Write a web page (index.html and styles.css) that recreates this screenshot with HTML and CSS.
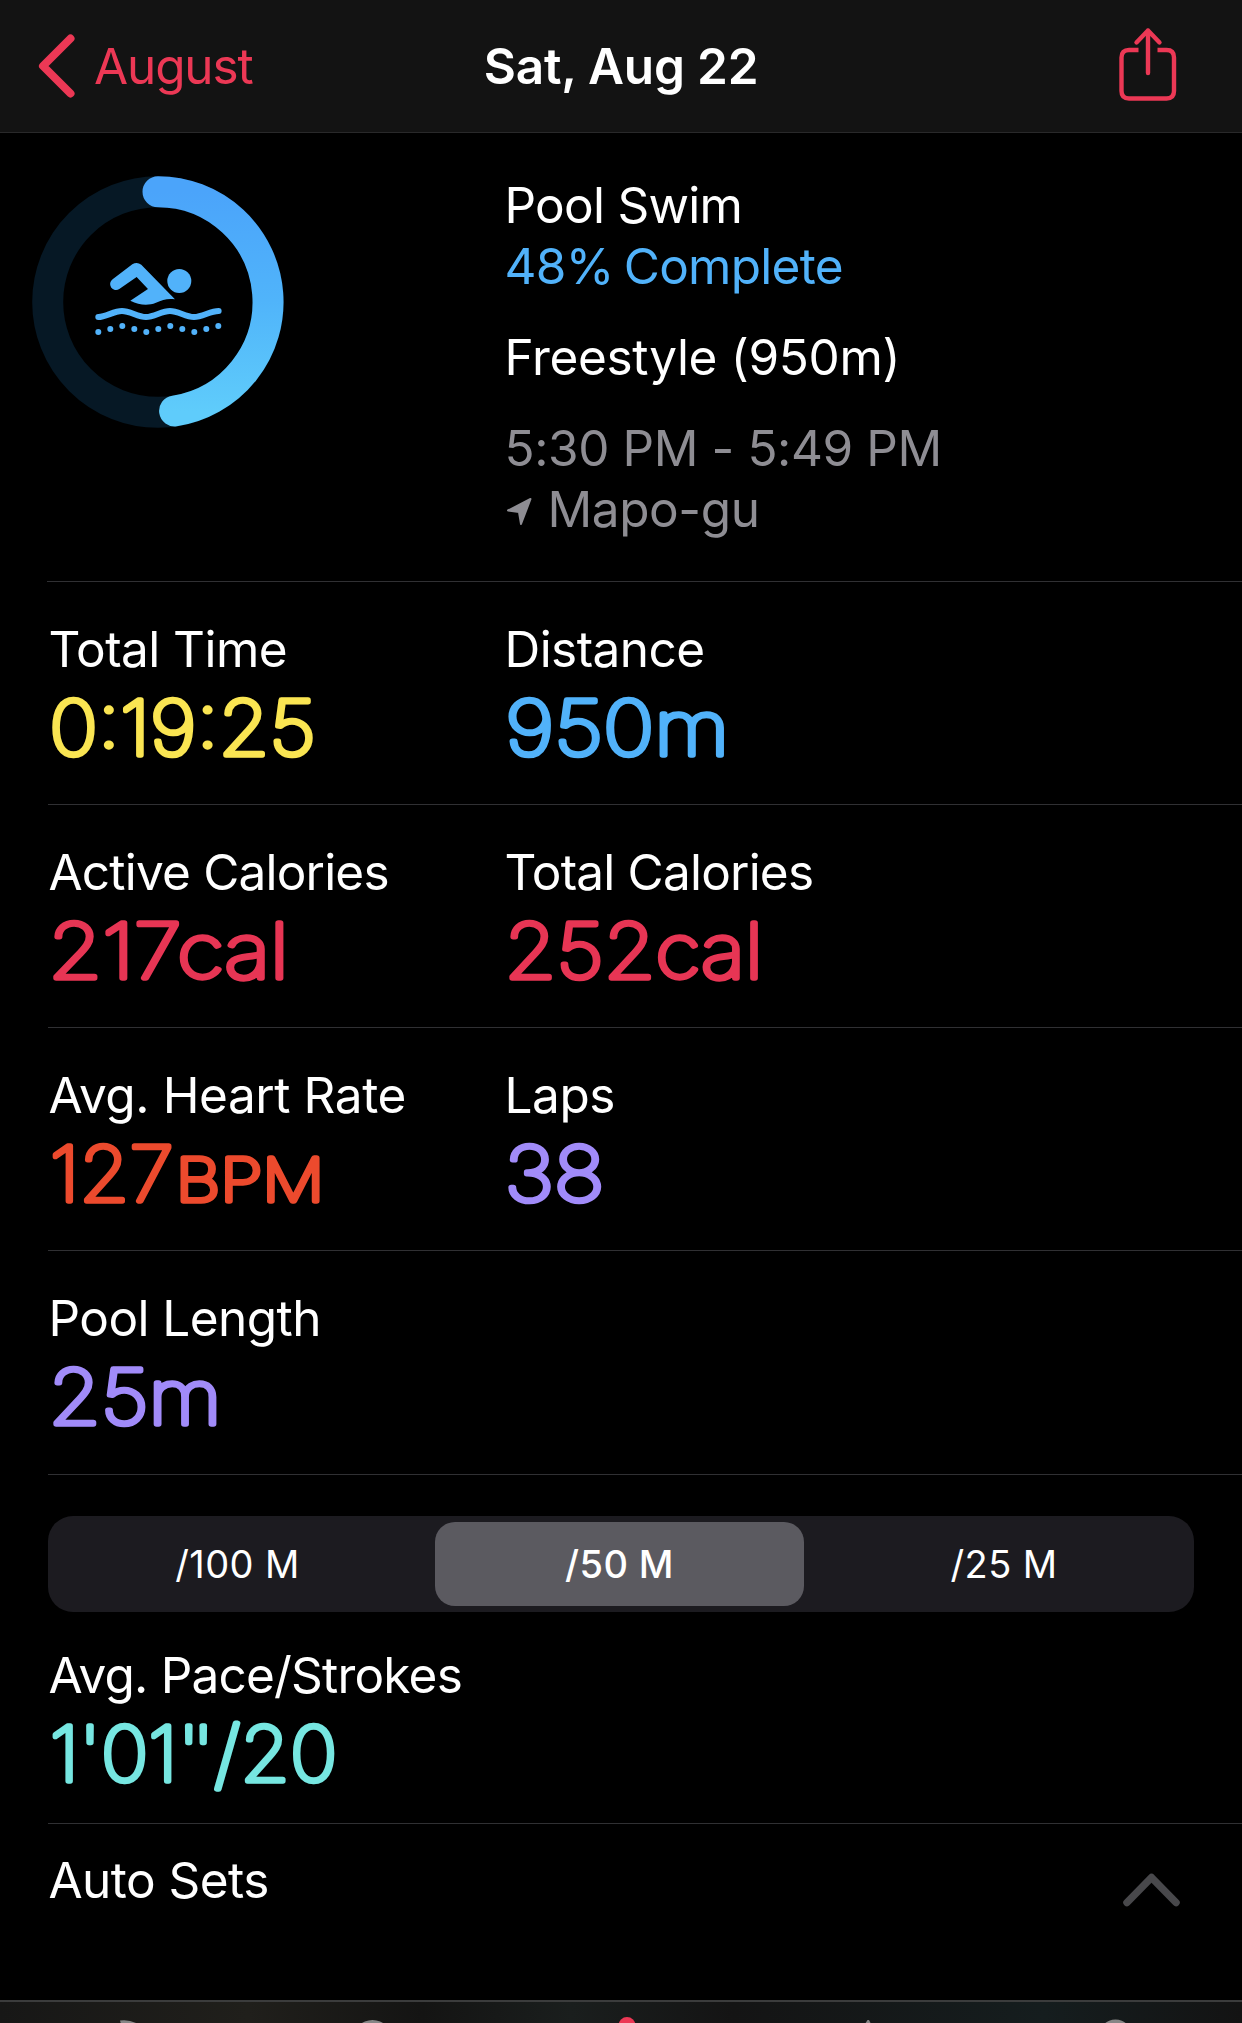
FILE: index.html
```html
<!DOCTYPE html>
<html lang="en">
<head>
<meta charset="utf-8">
<title>Workout</title>
<link rel="stylesheet" href="styles.css">
</head>
<body>
<div class="screen">
  <header class="nav">
    <a class="back">
      <svg class="back-icon" width="40" height="68" viewBox="0 0 40 68"><path d="M33.5 6.5 6 34l27.500 27.500" /></svg>
      <span class="back-label">August</span>
    </a>
    <h1 class="title">Sat, Aug 22</h1>
    <a class="share">
      <svg width="62" height="76" viewBox="0 0 62 76">
        <path class="box" d="M21.500 24H12Q4.500 24 4.500 31.500V65Q4.500 72.500 12 72.500H49.500Q57 72.500 57 65V31.500Q57 24 49.500 24H40.500"/>
        <path class="arrow" d="M31 47V4.500M19.500 16.500 31 4.500 42.500 16.500"/>
      </svg>
    </a>
  </header>

  <section class="summary">
    <div class="ring-cell">
      <svg width="252" height="252" viewBox="0 0 252 252">
        <defs>
          <linearGradient id="ringFill" x1="0" y1="0" x2="0" y2="1">
            <stop offset="0" stop-color="#4ba4fa"/><stop offset=".5" stop-color="#50b4fa"/><stop offset="1" stop-color="#5fccfb"/>
          </linearGradient>
        </defs>
        <circle class="track" cx="126" cy="126" r="110.300"/>
        <path class="progress" d="M126 15.700A110.300 110.300 0 0 1 142.600 235"/>
        <g transform="translate(52.300 74) scale(.33333)" class="swimmer">
          <path d="M85 88 144 43Q158 34 171 44L272 148C250 144 235 150 215 158C190 168 165 165 138 152L191 117L157 81L105 117A17 17 0 0 1 85 88Z"/>
          <circle cx="285" cy="93" r="36"/>
          <path class="wave" d="M42 201C65 201 88 183 113 183S160 201 185 201S232 183 257 183S304 201 329 201S378 183 403 183"/>
          <path class="dots" d="M42 246h0M78 237h0M114 228h0M150 237h0M186 246h0M222 237h0M258 228h0M294 237h0M330 246h0M366 237h0M402 228h0"/>
        </g>
      </svg>
    </div>
    <div class="info">
      <p class="ls7">Pool Swim</p>
      <p class="blue ls7 complete">48% Complete</p>
      <p class="gap ls3">Freestyle (950m)</p>
      <p class="gap grey ls4">5:30 PM - 5:49 PM</p>
      <p class="grey ls4 place"><svg class="loc" width="28" height="30" viewBox="0 0 28 30"><path d="M3 14.500 25.500 3 16 28 14 16Z"/></svg><span>Mapo-gu</span></p>
    </div>
  </section>

  <section class="row">
    <div class="metric"><p>Total Time</p><svg class="value yellow"><text x="0.300" y="75" textLength="266.500" lengthAdjust="spacingAndGlyphs">0:19:25</text></svg></div>
    <div class="metric"><p>Distance</p><svg class="value blue"><text x="0.300" y="75" textLength="224" lengthAdjust="spacingAndGlyphs">950m</text></svg></div>
  </section>
  <section class="row">
    <div class="metric"><p class="ls8">Active Calories</p><svg class="value red"><text x="-0.700" y="75" textLength="240.500" lengthAdjust="spacingAndGlyphs">217cal</text></svg></div>
    <div class="metric"><p class="ls8">Total Calories</p><svg class="value red"><text x="-0.400" y="75" textLength="258.500" lengthAdjust="spacingAndGlyphs">252cal</text></svg></div>
  </section>
  <section class="row">
    <div class="metric"><p class="ls4">Avg. Heart Rate</p><svg class="value orange"><text x="0.700" y="75" textLength="124" lengthAdjust="spacingAndGlyphs">127</text><text class="unit" x="126.800" y="75" textLength="148.500" lengthAdjust="spacingAndGlyphs">BPM</text></svg></div>
    <div class="metric"><p class="ls4">Laps</p><svg class="value purple"><text x="-0.200" y="75" textLength="99.500" lengthAdjust="spacingAndGlyphs">38</text></svg></div>
  </section>
  <section class="row last">
    <div class="metric"><p>Pool Length</p><svg class="value purple"><text x="-0.400" y="75" textLength="173" lengthAdjust="spacingAndGlyphs">25m</text></svg></div>
  </section>

  <section class="pace">
    <div class="segments">
      <span class="segment">/100 M</span>
      <span class="segment selected">/50 M</span>
      <span class="segment">/25 M</span>
    </div>
    <div class="metric"><p class="ls8">Avg. Pace/Strokes</p><svg class="value teal"><text x="0.700" y="75" textLength="287.500" lengthAdjust="spacingAndGlyphs">1'01'<tspan dx="-7">'</tspan>/20</text></svg></div>
  </section>

  <section class="sets">
    <p>Auto Sets</p>
    <svg class="chevron" width="60" height="38" viewBox="0 0 60 38"><path d="M5 32.500 29.500 7.500 54 32.500"/></svg>
  </section>

  <footer class="tabs">
    <svg width="1242" height="21" viewBox="0 0 1242 21">
      <path d="M120 18.500Q129 17 138 22H121Z"/>
      <circle cx="372.500" cy="38" r="20"/>
      <circle class="active" cx="627" cy="23.500" r="8.500"/>
      <path d="M865 22 867.500 18H869L871 22Z"/>
      <circle cx="1115.500" cy="34" r="16.500"/>
    </svg>
  </footer>
</div>
</body>
</html>
```
FILE: styles.css
```css
* { box-sizing: border-box; }
body { margin: 0; background: #000; color: #fff; font-family: Inter, "Liberation Sans", sans-serif; font-size: 49.5px; line-height: 61px; }
p, h1 { margin: 0; }
svg { display: block; }

.screen { width: 1242px; height: 2023px; overflow: hidden; display: flex; flex-direction: column; letter-spacing: -0.55px; white-space: nowrap; }

.nav { height: 133px; flex: none; background: #131313; border-bottom: 1px solid #29292a; display: grid; grid-template-columns: 1fr auto 1fr; align-items: center; }
.back { display: flex; align-items: center; padding-left: 37px; color: #ec3855; letter-spacing: -1.14px; }
.back-icon { fill: none; stroke: #ec3855; stroke-width: 8px; stroke-linecap: round; stroke-linejoin: round; }
.back-label { padding-left: 17px; }
.title { font-size: 49.5px; font-weight: 600; letter-spacing: -0.19px; }
.share { justify-self: end; margin: 0 63px 4px 0; }
.share path { fill: none; stroke: #ec3855; stroke-width: 4.4px; }
.share .arrow { stroke-linecap: round; stroke-linejoin: round; }

.summary { height: 449px; flex: none; display: grid; grid-template-columns: 504.5px 1fr; border-bottom: 1px solid; border-image: linear-gradient(to right, transparent 48px, #303033 48px) 1; }
.ring-cell { padding: 43px 0 0 31.7px; }
.track { fill: none; stroke: #061825; stroke-width: 31px; }
.progress { fill: none; stroke: url(#ringFill); stroke-width: 31px; stroke-linecap: round; }
.swimmer { fill: #51b2fa; }
.swimmer .wave, .swimmer .dots { fill: none; stroke: #51b2fa; stroke-width: 18px; stroke-linecap: round; }
.info { padding-top: 42px; }
.gap { margin-top: 30px; }
.place { display: flex; align-items: center; gap: 15px; }
.loc { fill: #8e8d93; stroke: #8e8d93; stroke-width: 2px; stroke-linejoin: round; margin-top: 2px; }
.grey { color: #8e8d93; }
.complete { word-spacing: -3px; }

.ls3 { letter-spacing: -0.32px; }
.ls4 { letter-spacing: -0.41px; }
.ls7 { letter-spacing: -0.73px; }
.ls8 { letter-spacing: -0.8px; }

.row { height: 223px; flex: none; margin-left: 48px; padding: 37px 0 0 0.5px; border-bottom: 1px solid #303033; display: grid; grid-template-columns: 456px 1fr; }
.row.last { height: 224px; }
.value { width: 420px; height: 100px; overflow: visible; font-size: 75.5px; font-weight: 100; letter-spacing: 0; stroke-width: 5.3px; stroke-linejoin: round; stroke-linecap: round; }
.unit { font-size: 59px; }
.yellow { fill: #fae552; stroke: #fae552; }
.blue { color: #51b2fa; fill: #51b2fa; }
.value.blue { stroke: #51b2fa; }
.red { fill: #e73554; stroke: #e73554; }
.orange { fill: #ec4a2d; stroke: #ec4a2d; }
.purple { fill: #a18bf9; stroke: #a18bf9; }
.teal { fill: #76e6e1; stroke: #76e6e1; }

.pace { height: 349px; flex: none; margin-left: 48px; padding-top: 41px; border-bottom: 1px solid #303033; }
.segments { width: 1146px; height: 96px; padding: 6px 5px; border-radius: 25px; background: #1c1b20; display: grid; grid-template-columns: 369px 369px 374px; column-gap: 13px; font-size: 38px; letter-spacing: 0.4px; }
.segment { border-radius: 20px; display: flex; align-items: center; justify-content: center; }
.selected { background: #5b5a60; font-weight: 550; letter-spacing: 0.4px; }
.pace .metric { padding: 33px 0 0 0.5px; }

.sets { flex: 1; display: flex; justify-content: space-between; padding: 26px 60px 0 48.5px; }
.chevron { margin-top: 20px; fill: none; stroke: #48484b; stroke-width: 7.5px; stroke-linecap: round; stroke-linejoin: round; }

.tabs { height: 23px; flex: none; border-top: 2px solid #3b3c3c; background: linear-gradient(to right, #171716, #201f1b 20%, #141413 34%, #1a1e1d 46%, #141414 59%, #151d1e 84%, #131313); }
.tabs svg { fill: #868686; }
.tabs .active { fill: #ec3855; }
```
